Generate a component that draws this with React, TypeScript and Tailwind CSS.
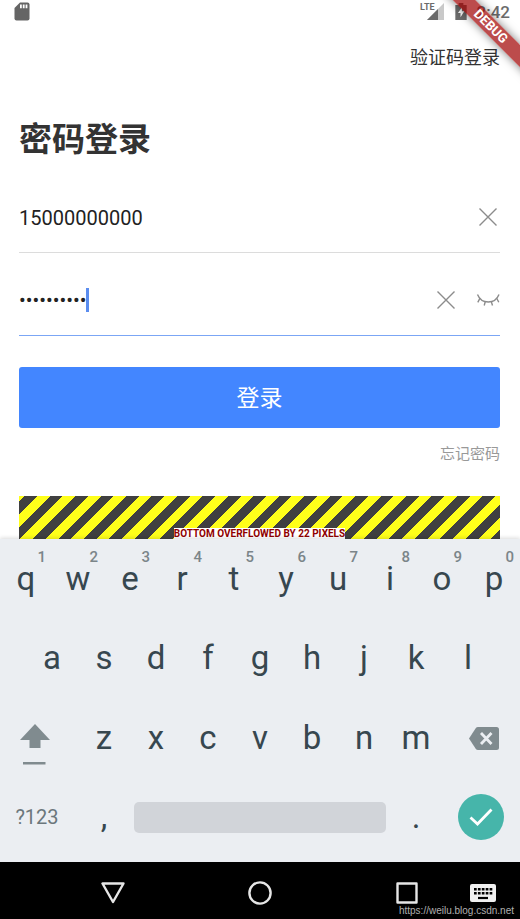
import React from "react";

const ROBOTO = "font-[Roboto,'Noto_Sans_CJK_SC',sans-serif]";

function SdCardIcon() {
  return (
    <svg width="16" height="19" viewBox="0 0 16 19" aria-hidden="true">
      <path
        fill="#656565"
        d="M6 .5h7.500a2 2 0 0 1 2 2v14a2 2 0 0 1-2 2h-11a2 2 0 0 1-2-2V6z"
      />
      <path fill="#fff" d="M6 2.500h1.800v3.800H6zM8.800 2.500h1.800v3.800H8.800zM11.600 2.500h1.800v3.800h-1.800z" />
    </svg>
  );
}

function SignalIcon() {
  return (
    <svg width="17" height="17" viewBox="0 0 17 17" aria-hidden="true">
      <path fill="#c9c9c9" d="M17 0v17H0z" />
      <path fill="#6b6b6b" d="M11 6v11H0z" />
    </svg>
  );
}

function BatteryIcon() {
  return (
    <svg width="12" height="17" viewBox="0 0 12 18" aria-hidden="true">
      <path fill="#6b6b6b" d="M3.500 0h5v2H12v16H0V2h3.500z" />
      <path fill="#fff" d="M7 4.500 2.800 10.500h2.700v4.500l4-6.300H7z" />
    </svg>
  );
}

function ClearIcon() {
  return (
    <svg width="20" height="20" viewBox="0 0 20 20" fill="none" stroke="#8c8c8c" strokeWidth="1.400" aria-hidden="true">
      <path d="M1.500 1.500l17 17M18.500 1.500l-17 17" />
    </svg>
  );
}

function EyeClosedIcon() {
  return (
    <svg width="24" height="20" viewBox="0 0 24 20" fill="none" stroke="#8c8c8c" strokeWidth="1.400" aria-hidden="true">
      <path d="M1.500 4.500C3.500 9.500 7.500 12 12.300 12S21 9.500 23 4.500" />
      <path d="M4 8.200 1.800 12.300M9.300 11.600 8.200 15.500M15.300 11.600l1.200 3.900M20.700 8.200l2.100 4.100" />
    </svg>
  );
}

function Key({ label, hint }: { label: string; hint?: string }) {
  return (
    <button
      type="button"
      className="relative col-span-2 flex h-full items-center justify-center text-[33px] leading-10 text-[#37474f]"
    >
      {label}
      {hint && (
        <span className="absolute top-2 right-1.5 text-[15px] leading-5 font-medium text-[#7b8589]">
          {hint}
        </span>
      )}
    </button>
  );
}

const rowClass = "grid grid-cols-[repeat(20,minmax(0,1fr))] items-center";

function Keyboard() {
  return (
    <section
      aria-label="Keyboard"
      className="relative mt-auto bg-[#ebeef2] pb-1.5 shadow-[0_-1px_4px_rgba(0,0,0,0.15)]"
    >
      <div className={`${rowClass} h-[79px]`}>
        {"qwertyuiop".split("").map((k, i) => (
          <Key key={k} label={k} hint={String((i + 1) % 10)} />
        ))}
      </div>
      <div className={`${rowClass} h-20`}>
        <span />
        {"asdfghjkl".split("").map((k) => (
          <Key key={k} label={k} />
        ))}
      </div>
      <div className={`${rowClass} h-20`}>
        <button type="button" aria-label="Shift" className="col-span-3 flex h-full items-center justify-center pt-3 pr-2">
          <svg width="30" height="41" viewBox="0 0 30 41" aria-hidden="true">
            <path fill="#808b8f" d="M15 0l15 16h-9.500v8h-11v-8H0z" />
            <path fill="#808b8f" d="M3 38h22.500v2.500H3z" />
          </svg>
        </button>
        {"zxcvbnm".split("").map((k) => (
          <Key key={k} label={k} />
        ))}
        <button type="button" aria-label="Backspace" className="col-span-3 flex h-full items-center justify-center pl-1.5">
          <svg width="30" height="23" viewBox="0 0 30 23" aria-hidden="true">
            <path fill="#808b8f" d="M9 0h18.500A2.500 2.500 0 0 1 30 2.500v18a2.500 2.500 0 0 1-2.500 2.500H9q-1.500 0-2.300-1.200L0 11.500 6.700 1.200Q7.500 0 9 0z" />
            <path stroke="#ebeef2" strokeWidth="2.800" d="M12 6l10.500 11M22.500 6 12 17" />
          </svg>
        </button>
      </div>
      <div className={`${rowClass} h-[78px]`}>
        <button type="button" className="col-span-3 h-full pr-1 text-center text-xl text-[#6b777c]">
          ?123
        </button>
        <Key label="," />
        <button type="button" aria-label="Space" className="col-span-10 mx-1 h-[31px] rounded-[5px] bg-[#d1d4d9]" />
        <Key label="." />
        <button type="button" aria-label="Done" className="col-span-3 mx-auto flex size-[46px] items-center justify-center rounded-full bg-[#46b5aa]">
          <svg width="24" height="20" viewBox="0 0 24 20" fill="none" stroke="#fff" strokeWidth="2.800" aria-hidden="true">
            <path d="M1.500 10.500l7 6.500L22.500 2.500" />
          </svg>
        </button>
      </div>
    </section>
  );
}

function NavigationBar() {
  return (
    <nav aria-label="System" className="relative grid h-[57px] grid-cols-3 bg-black px-10">
      <button type="button" aria-label="Back" className="flex items-center justify-center pt-1">
        <svg width="24" height="22" viewBox="0 0 24 22" fill="none" stroke="#e6e6e6" strokeWidth="2.400" strokeLinejoin="round" aria-hidden="true">
          <path d="M1.500 1.500h21L12 20z" />
        </svg>
      </button>
      <button type="button" aria-label="Home" className="flex items-center justify-center pt-1">
        <svg width="24" height="24" viewBox="0 0 24 24" fill="none" stroke="#e6e6e6" strokeWidth="2.400" aria-hidden="true">
          <circle cx="12" cy="12" r="10.600" />
        </svg>
      </button>
      <button type="button" aria-label="Recents" className="flex items-center justify-center pt-1">
        <svg width="22" height="22" viewBox="0 0 22 22" fill="none" stroke="#e6e6e6" strokeWidth="2.400" strokeLinejoin="round" aria-hidden="true">
          <path d="M1.500 1.500h19v19h-19z" />
        </svg>
      </button>
      <button type="button" aria-label="Switch keyboard" className="absolute top-[22px] right-6">
        <svg width="26" height="18" viewBox="0 0 26 18" aria-hidden="true">
          <rect width="26" height="18" rx="2" fill="#f0f0f0" />
          <path stroke="#000" strokeWidth="2.600" strokeDasharray="2.700 1.200" d="M4 5.300h18.300M4 9.200h18.300" />
          <path stroke="#000" strokeWidth="2.200" d="M8 14h10" />
        </svg>
      </button>
      <span className="absolute right-1.5 bottom-0 font-[Liberation_Sans,sans-serif] text-[10px] leading-4 text-[#b0b0b0]">
        https://weilu.blog.csdn.net
      </span>
    </nav>
  );
}

export default function App() {
  return (
    <div className={`relative flex min-h-screen flex-col overflow-hidden bg-white text-[#222] ${ROBOTO}`}>
      <div className="flex h-[23px] items-center pr-2.5 pl-3.5 text-[#6b6b6b]">
        <SdCardIcon />
        <span className="-mr-2 ml-auto self-start pt-px text-[9px] leading-3 font-bold">LTE</span>
        <SignalIcon />
        <span className="mr-2.5 ml-[11px]">
          <BatteryIcon />
        </span>
        <span className="text-[17px] leading-6 font-medium">2:42</span>
      </div>

      <form className="flex flex-col pr-5 pl-[19px]" onSubmit={(e) => e.preventDefault()}>
        <header className="flex h-[69px] items-center justify-end">
          <a href="#code" className="text-lg text-[#333]">
            验证码登录
          </a>
        </header>
        <h1 className="h-[90px] text-[33px] leading-[96px] font-bold text-[#333]">密码登录</h1>

        <div className="flex h-[71px] items-center border-b border-[#dcdcdc]">
          <input
            type="tel"
            aria-label="手机号"
            defaultValue="15000000000"
            className="min-w-0 flex-1 pt-0.5 text-xl outline-none"
          />
          <button type="button" aria-label="清除手机号" className="pr-0.5">
            <ClearIcon />
          </button>
        </div>

        <div className="mt-3 flex h-[71px] items-center border-b border-[#7ba6f5]">
          <input
            type="password"
            aria-label="密码"
            defaultValue="1234567890"
            className="field-sizing-content text-xl outline-none"
          />
          <span className="h-6 w-[3px] bg-[#5b8def]" />
          <button type="button" aria-label="清除密码" className="ml-auto">
            <ClearIcon />
          </button>
          <button type="button" aria-label="显示密码" className="ml-5">
            <EyeClosedIcon />
          </button>
        </div>

        <button type="submit" className="mt-[31px] h-[61px] rounded-[3px] bg-[#4386ff] pt-1 text-[23px] text-white">
          登录
        </button>
        <a href="#forgot" className="mt-4 self-end text-[15px] leading-5 text-[#999]">
          忘记密码
        </a>

        <div className="mt-8 flex h-[43px] items-end justify-center bg-[repeating-linear-gradient(135deg,#ffff1a_0px,#ffff1a_4px,#404040_4px,#404040_13px,#ffff1a_13px,#ffff1a_18px)]">
          <span className="bg-white text-[10px] leading-[11px] font-bold text-[#900000]">
            BOTTOM OVERFLOWED BY 22 PIXELS
          </span>
        </div>
      </form>

      <Keyboard />
      <NavigationBar />

      <div className="absolute top-5 -right-9 flex h-4 w-32 rotate-45 items-center justify-center bg-[#a00000]/70 pr-1 text-[13px] leading-4 font-bold text-white shadow-[0_0_10px_rgba(0,0,0,0.5)]">
        DEBUG
      </div>
    </div>
  );
}
